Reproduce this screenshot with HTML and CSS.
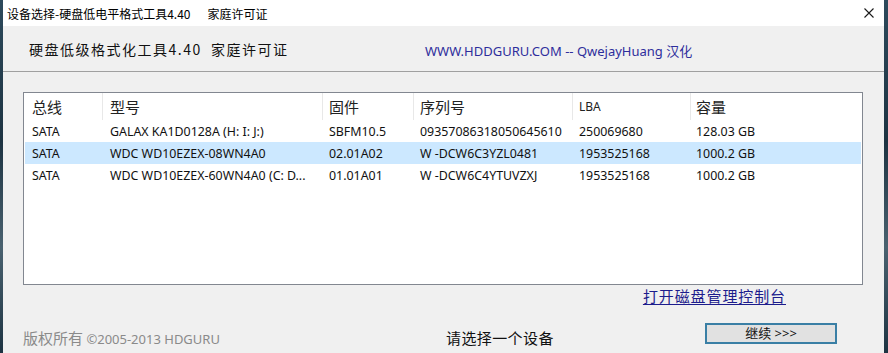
FILE: index.html
```html
<!DOCTYPE html>
<html lang="zh-CN">
<head>
    <meta charset="UTF-8">
    <meta name="viewport" content="width=device-width, initial-scale=1.0">
    <title>设备选择-硬盘低电平格式工具4.40</title>
    <link rel="stylesheet" href="styles.css">
</head>
<body>
    <div class="window">
        <div class="titlebar">
            <span class="title">设备选择-硬盘低电平格式工具4.40</span>
            <span class="title license">家庭许可证</span>
            <span class="close">
                <svg width="10" height="10" viewBox="0 0 10 10">
                    <path d="M0.5 0.5 L9.5 9.5 M9.5 0.5 L0.5 9.5" stroke="#1a1a1a" stroke-width="1.1" fill="none"/>
                </svg>
            </span>
        </div>

        <div class="banner">
            <span class="product">硬盘低级格式化工具4.40&nbsp;&nbsp;家庭许可证</span>
            <span class="site">WWW.HDDGURU.COM -- QwejayHuang 汉化</span>
        </div>

        <div class="content">
            <div class="device-list">
                <div class="list-row list-head">
                    <div class="cell first">总线</div>
                    <div class="cell">型号</div>
                    <div class="cell">固件</div>
                    <div class="cell">序列号</div>
                    <div class="cell lba">LBA</div>
                    <div class="cell last">容量</div>
                </div>
                <div class="list-row">
                    <div class="cell first">SATA</div>
                    <div class="cell">GALAX KA1D0128A (H: I: J:)</div>
                    <div class="cell">SBFM10.5</div>
                    <div class="cell">09357086318050645610</div>
                    <div class="cell">250069680</div>
                    <div class="cell last">128.03 GB</div>
                </div>
                <div class="list-row selected">
                    <div class="cell first">SATA</div>
                    <div class="cell">WDC WD10EZEX-08WN4A0</div>
                    <div class="cell">02.01A02</div>
                    <div class="cell">W -DCW6C3YZL0481</div>
                    <div class="cell">1953525168</div>
                    <div class="cell last">1000.2 GB</div>
                </div>
                <div class="list-row">
                    <div class="cell first">SATA</div>
                    <div class="cell">WDC WD10EZEX-60WN4A0 (C: D...</div>
                    <div class="cell">01.01A01</div>
                    <div class="cell">W -DCW6C4YTUVZXJ</div>
                    <div class="cell">1953525168</div>
                    <div class="cell last">1000.2 GB</div>
                </div>
            </div>

            <div class="link-row">
                <a href="#" class="console-link">打开磁盘管理控制台</a>
            </div>

            <div class="footer">
                <span class="copyright">版权所有 <span class="latin">©2005-2013 HDGURU</span></span>
                <span class="status">请选择一个设备</span>
                <button class="continue">继续 &gt;&gt;&gt;</button>
            </div>
        </div>
    </div>
</body>
</html>
```

FILE: styles.css
```css
body {
    margin: 0;
    width: 888px;
    height: 353px;
    overflow: hidden;
    background: linear-gradient(#2d4a5c, #1d3342 40%, #4a6270 70%, #1d3342);
    font-family: "Noto Sans", "Noto Sans CJK SC", sans-serif;
}
.window {
    margin-left: 3px;
    width: 881px;
    height: 353px;
    background-color: #f0f0f0;
    overflow: hidden;
}
.titlebar {
    height: 26px;
    background-color: #fff;
    display: flex;
    align-items: center;
    padding-left: 4px;
}
.title {
    font-family: "Noto Sans CJK SC", sans-serif;
    font-size: 12px;
    color: #000;
}
.license {
    margin-left: 17px;
}
.close {
    margin-left: auto;
    margin-right: 10px;
    display: flex;
}
.banner {
    height: 45px;
    border-bottom: 1px solid #a0a0a0;
    display: flex;
    align-items: center;
    padding-left: 26px;
}
.product {
    width: 396px;
    font-family: "Noto Sans CJK SC", sans-serif;
    font-size: 14px;
    letter-spacing: 1.5px;
    color: #111;
}
.site {
    margin-top: 3px;
    font-size: 13px;
    color: #2e2e9c;
}
.content {
    padding: 20px 21px 0 20px;
}
.device-list {
    box-sizing: border-box;
    height: 193px;
    border: 1px solid #828790;
    background-color: #fff;
    padding: 0 1px;
}
.list-row {
    display: grid;
    grid-template-columns: 78px 220px 91px 159px 118px 1fr;
    height: 22px;
    align-items: center;
    font-size: 12.4px;
    color: #111;
}
.list-head {
    height: 27px;
    align-items: stretch;
    font-family: "Noto Sans CJK SC", sans-serif;
    font-size: 15px;
    color: #222;
}
.list-head .cell {
    display: flex;
    align-items: center;
    border-right: 1px solid #e8e8e8;
}
.list-head .cell.last {
    border-right: none;
}
.list-head .lba {
    font-family: "Noto Sans", sans-serif;
    font-size: 12px;
}
.cell {
    padding-left: 6px;
    white-space: nowrap;
    overflow: hidden;
}
.cell.first {
    padding-left: 7px;
}
.list-row .cell:nth-child(2) {
    padding-left: 7px;
}
.cell.last {
    padding-left: 5px;
}
.selected {
    background-color: #cce8ff;
}
.link-row {
    display: flex;
    justify-content: flex-end;
    padding-right: 77px;
    margin-top: 1px;
    height: 20px;
    line-height: 20px;
}
.console-link {
    font-family: "Noto Sans CJK SC", sans-serif;
    font-size: 15px;
    letter-spacing: 0.9px;
    color: #1c1c8c;
    text-decoration: underline;
    text-underline-offset: 2px;
}
.footer {
    display: flex;
    align-items: flex-start;
}
.copyright {
    width: 423px;
    margin-top: 22px;
    line-height: 20px;
    font-family: "Noto Sans CJK SC", sans-serif;
    font-size: 15px;
    color: #8a8a8a;
}
.copyright .latin {
    font-family: "Noto Sans", sans-serif;
    font-size: 13px;
}
.status {
    width: 259px;
    margin-top: 22px;
    line-height: 20px;
    font-family: "Noto Sans CJK SC", sans-serif;
    font-size: 15px;
    letter-spacing: 0.4px;
    color: #111;
}
.continue {
    box-sizing: border-box;
    width: 132px;
    height: 21px;
    margin-top: 17px;
    padding: 0;
    background-color: #e1e1e1;
    border: 2px solid #3a7fa5;
    font-family: "Noto Sans", "Noto Sans CJK SC", sans-serif;
    font-size: 13px;
    line-height: 15px;
    color: #111;
}
```
